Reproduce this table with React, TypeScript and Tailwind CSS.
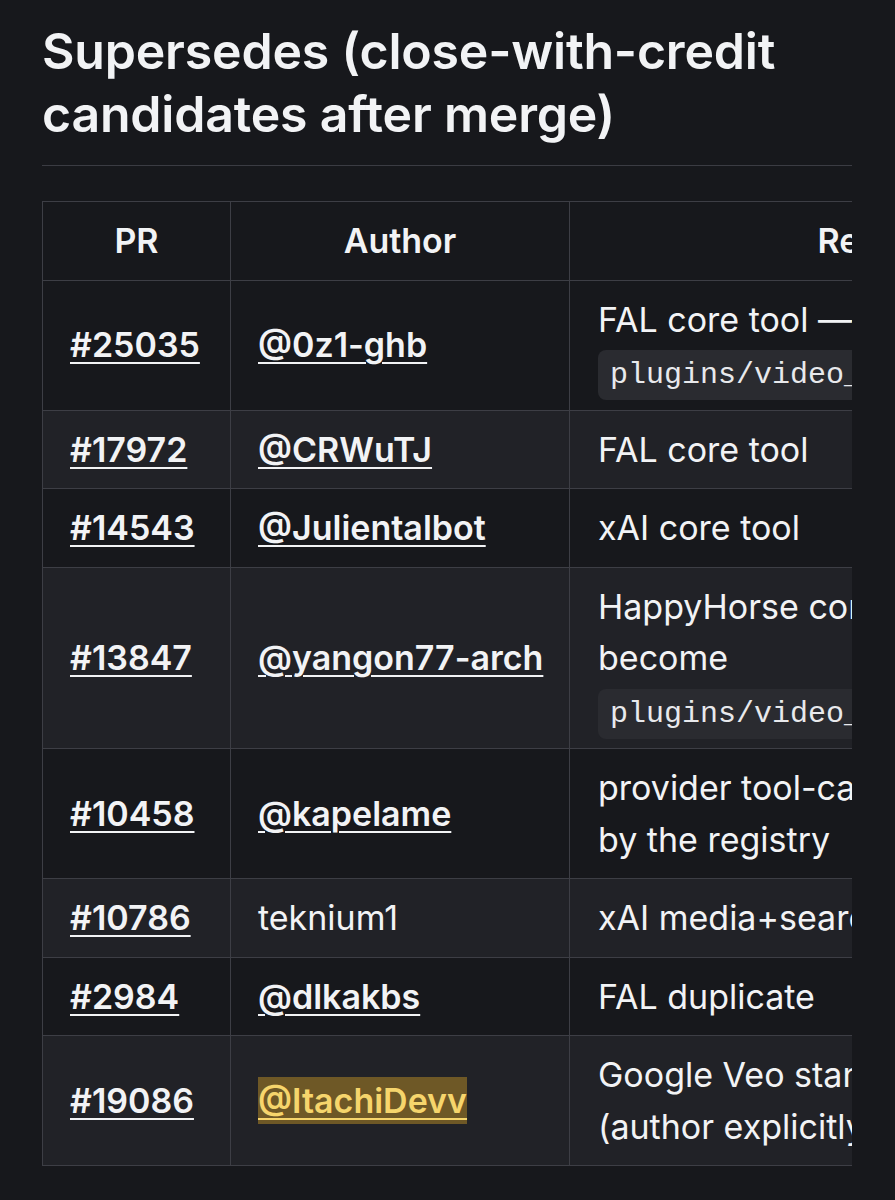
import React from 'react';

type Row = {
  pr: string;
  author: string;
  authorLink?: boolean;
  highlight?: boolean;
  reason: React.ReactNode;
};

const Code: React.FC<{ children: React.ReactNode }> = ({ children }) => (
  <code
    className="rounded-[8px] bg-[#2a2b30] px-[12px] py-[8px] text-[30px] leading-none text-[#e8e9ec]"
    style={{ fontFamily: '"Liberation Mono", "DejaVu Sans Mono", monospace' }}
  >
    {children}
  </code>
);

const rows: Row[] = [
  {
    pr: '#25035',
    author: '@0z1-ghb',
    authorLink: true,
    reason: (
      <>
        FAL core tool — would move to
        <br />
        <Code>plugins/video_gen/fal</Code>
      </>
    ),
  },
  { pr: '#17972', author: '@CRWuTJ', authorLink: true, reason: 'FAL core tool' },
  { pr: '#14543', author: '@Julientalbot', authorLink: true, reason: 'xAI core tool' },
  {
    pr: '#13847',
    author: '@yangon77-arch',
    authorLink: true,
    reason: (
      <>
        HappyHorse core tool — should
        <br />
        become
        <br />
        <Code>plugins/video_gen/happyhorse</Code>
      </>
    ),
  },
  {
    pr: '#10458',
    author: '@kapelame',
    authorLink: true,
    reason: (
      <>
        provider tool-catalog overlap, replaced
        <br />
        by the registry
      </>
    ),
  },
  { pr: '#10786', author: 'teknium1', reason: 'xAI media+search bundle' },
  { pr: '#2984', author: '@dlkakbs', authorLink: true, reason: 'FAL duplicate' },
  {
    pr: '#19086',
    author: '@ItachiDevv',
    authorLink: true,
    highlight: true,
    reason: (
      <>
        Google Veo standalone tool
        <br />
        (author explicitly offered to port)
      </>
    ),
  },
];

const linkCls = 'font-semibold underline decoration-2 underline-offset-[5px]';

const App: React.FC = () => {
  return (
    <div
      className="min-h-screen bg-[#17181c] pl-[42px] pr-[43px] pt-[20px] text-[#f2f3f5]"
      style={{ fontFamily: 'Inter, "Noto Sans", sans-serif' }}
    >
      {/* Heading */}
      <h2 className="border-b border-[#3b3c43] pb-[19px] text-[50px] font-semibold leading-[63px] tracking-[-0.2px]">
        Supersedes (close-with-credit candidates after merge)
      </h2>

      {/* Table, clipped on the right like a scrolled markdown table */}
      <div className="mt-[35px] overflow-hidden">
        <table className="w-[1145px] table-fixed border-collapse text-[34px] leading-[51.5px]">
          <colgroup>
            <col className="w-[188px]" />
            <col className="w-[339px]" />
            <col className="w-[618px]" />
          </colgroup>
          <thead>
            <tr className="bg-[#17181c]">
              <th className="border border-[#3d3e45] px-[27px] py-[13px] text-center font-semibold">PR</th>
              <th className="border border-[#3d3e45] px-[27px] py-[13px] text-center font-semibold">Author</th>
              <th className="border border-[#3d3e45] px-[27px] py-[13px] text-center font-semibold">Reason</th>
            </tr>
          </thead>
          <tbody>
            {rows.map((r, i) => (
              <tr key={r.pr} className={i % 2 === 0 ? 'bg-[#17181c]' : 'bg-[#212227]'}>
                <td className="border border-[#3d3e45] px-[27px] py-[13px] align-middle">
                  <span className={linkCls}>{r.pr}</span>
                </td>
                <td className="border border-[#3d3e45] px-[27px] py-[13px] align-middle whitespace-nowrap">
                  {r.highlight ? (
                    <span className={`${linkCls} bg-[#6e5826] py-[3px] text-[#f6d56c]`}>{r.author}</span>
                  ) : r.authorLink ? (
                    <span className={linkCls}>{r.author}</span>
                  ) : (
                    <span>{r.author}</span>
                  )}
                </td>
                <td className="border border-[#3d3e45] px-[28px] py-[13px] align-middle whitespace-nowrap">
                  {r.reason}
                </td>
              </tr>
            ))}
          </tbody>
        </table>
      </div>
    </div>
  );
};

export default App;
